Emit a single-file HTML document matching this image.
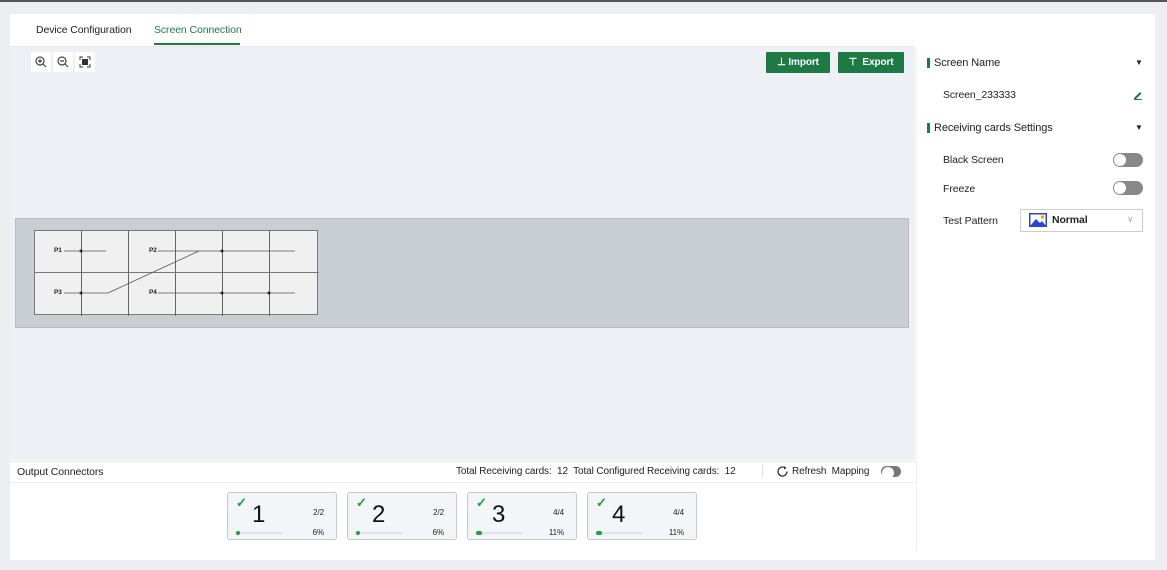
<!DOCTYPE html>
<html><head><meta charset="utf-8"><style>
*{box-sizing:border-box;margin:0;padding:0}
body{width:1167px;height:570px;background:#eceef2;font-family:"Liberation Sans",sans-serif;font-size:10.5px;color:#222;position:relative;overflow:hidden;letter-spacing:-0.1px}
.a{position:absolute}
.topline{left:0;top:0;width:1167px;height:2px;background:#555}
.main{left:10px;top:14px;width:1145px;height:546px;background:#fff}
.tab{top:24px;font-size:10.5px}
.canvas{left:10px;top:47px;width:905px;height:413px;background:#eef0f6}
.zb{top:52px;width:20px;height:20px;background:#fff;display:flex;align-items:center;justify-content:center}
.btn{top:52px;height:21px;background:#1d7a45;color:#fff;font-size:10px;font-weight:bold;display:flex;align-items:center;justify-content:center;border-radius:1px}
.strip{left:15px;top:218px;width:894px;height:110px;background:#c9cdd4;border:1px solid #b8bcc3}
.grid{left:34px;top:230px;width:284px;height:85px;background:#f0f0f0;border:1px solid #777}
.vl{width:1px;background:#666;top:0;height:85px}
.hl{height:1px;background:#777;left:0;width:284px;top:41px}
.lbl{font-size:6.5px;font-weight:bold}
.right{left:916px;top:47px;width:239px;height:504px;border-left:1px solid #eee;background:#fff}
.sec{font-size:11px;color:#222}
.bar{width:3px;height:10px;background:#1d7a45}
.tog{width:30px;height:14px;border-radius:7px;background:#888}
.tog::after{content:"";position:absolute;left:1px;top:1px;width:12px;height:12px;border-radius:6px;background:#fff}
.card{top:492px;width:110px;height:48px;border:1px solid #c4c8ce;border-radius:3px;background:#f4f5f8}
.card .n{position:absolute;left:24px;top:8px;font-size:24px;color:#111}
.card .c{position:absolute;left:8px;top:2px;color:#1aa33a;font-size:13px;font-weight:bold}
.card .f{position:absolute;right:12px;top:15px;font-size:8px}
.card .p{position:absolute;right:12px;top:35px;font-size:8px}
.card .t{position:absolute;left:8px;top:39px;width:46px;height:2px;background:#e0e2e6}
.card .d{position:absolute;left:8px;top:38px;width:4px;height:4px;border-radius:2px;background:#1aa33a}
</style></head><body>
<div class="a topline"></div>
<div class="a main"></div>
<div class="a tab" style="left:36px">Device Configuration</div>
<div class="a tab" style="left:154px;color:#1d7a45">Screen Connection</div>
<div class="a" style="left:154px;top:43px;width:86px;height:2px;background:#1d7a45"></div>
<div class="a" style="left:10px;top:46px;width:905px;height:1px;background:#e6e8ec"></div>
<div class="a canvas"></div>
<div class="a zb" style="left:31px"><svg width="12" height="12"><circle cx="5" cy="5" r="4" fill="none" stroke="#444" stroke-width="1.2"/><path d="M8 8l3 3M3 5h4M5 3v4" stroke="#444" stroke-width="1.2"/></svg></div>
<div class="a zb" style="left:53px"><svg width="12" height="12"><circle cx="5" cy="5" r="4" fill="none" stroke="#444" stroke-width="1.2"/><path d="M8 8l3 3M3 5h4" stroke="#444" stroke-width="1.2"/></svg></div>
<div class="a zb" style="left:75px"><svg width="12" height="12"><rect x="3" y="3" width="6" height="6" fill="#333"/><path d="M1 4V1h3M8 1h3v3M11 8v3H8M4 11H1V8" stroke="#333" fill="none"/></svg></div>
<div class="a btn" style="left:766px;width:64px">⊥ Import</div>
<div class="a btn" style="left:838px;width:66px">⊤&nbsp; Export</div>
<div class="a strip"></div>
<div class="a grid">
 <div class="a vl" style="left:46px"></div><div class="a vl" style="left:93px"></div><div class="a vl" style="left:140px"></div><div class="a vl" style="left:187px"></div><div class="a vl" style="left:234px"></div>
 <div class="a hl"></div>
 <svg class="a" style="left:0;top:0" width="284" height="85"><g stroke="#555" stroke-width="0.8" fill="none"><path d="M29 20H71"/><path d="M123 20H260"/><path d="M29 62H73L164 20"/><path d="M123 62H260"/></g><g fill="#222"><circle cx="46" cy="20" r="1.5"/><circle cx="187" cy="20" r="1.5"/><circle cx="46" cy="62" r="1.5"/><circle cx="187" cy="62" r="1.5"/><circle cx="234" cy="62" r="1.5"/></g></svg>
 <div class="a lbl" style="left:19px;top:16px">P1</div><div class="a lbl" style="left:114px;top:16px">P2</div>
 <div class="a lbl" style="left:19px;top:58px">P3</div><div class="a lbl" style="left:114px;top:58px">P4</div>
</div>
<div class="a right"></div>
<div class="a bar" style="left:927px;top:58px"></div><div class="a sec" style="left:934px;top:57px">Screen Name</div>
<div class="a" style="left:1135px;top:58px;font-size:8px">▼</div>
<div class="a" style="left:943px;top:89px">Screen_233333</div>
<svg class="a" style="left:1133px;top:90px" width="10" height="10"><path d="M1 8L7 2l1.5 1.5-6 6H1z" fill="#1d7a45"/><path d="M1 9.5h8" stroke="#1d7a45"/></svg>
<div class="a bar" style="left:927px;top:123px"></div><div class="a sec" style="left:934px;top:122px">Receiving cards Settings</div>
<div class="a" style="left:1135px;top:123px;font-size:8px">▼</div>
<div class="a" style="left:943px;top:154px">Black Screen</div>
<div class="a tog" style="left:1113px;top:153px"></div>
<div class="a" style="left:943px;top:183px">Freeze</div>
<div class="a tog" style="left:1113px;top:181px"></div>
<div class="a" style="left:943px;top:215px">Test Pattern</div>
<div class="a" style="left:1020px;top:209px;width:123px;height:23px;border:1px solid #ccc;background:#fff"></div>
<svg class="a" style="left:1029px;top:213px" width="18" height="14"><rect width="18" height="14" fill="#2747c9"/><rect x="1.5" y="1.5" width="15" height="11" fill="#fff"/><path d="M1.5 12.5L7 6l4 4 2-2 3.5 4.5z" fill="#2747c9"/><rect x="12" y="2.5" width="3" height="3" fill="#f0a000"/></svg>
<div class="a" style="left:1052px;top:214px;font-weight:bold">Normal</div>
<div class="a" style="left:1127px;top:214px;color:#aaa;font-size:9px">∨</div>
<div class="a" style="left:10px;top:461px;width:905px;height:99px;background:#fff;border-top:1px solid #e4e6ea"></div>
<div class="a" style="left:10px;top:482px;width:905px;height:1px;background:#eceef2"></div>
<div class="a" style="left:17px;top:466px">Output Connectors</div>
<div class="a" style="left:456px;top:466px;font-size:10px">Total Receiving cards:&nbsp; 12&nbsp; Total Configured Receiving cards:&nbsp; 12</div>
<div class="a" style="left:762px;top:465px;width:1px;height:12px;background:#ddd"></div>
<svg class="a" style="left:776px;top:465px" width="13" height="13"><path d="M11 6.5A4.5 4.5 0 1 1 9 2.8" fill="none" stroke="#333" stroke-width="1.3"/><path d="M8 1l2.5 2-2.5 1.5z" fill="#333"/></svg>
<div class="a" style="left:792px;top:466px;font-size:10px">Refresh&nbsp; Mapping</div>
<div class="a tog" style="left:881px;top:466px;width:20px;height:11px;background:#777"></div>
<div class="a card" style="left:227px"><span class="c">✓</span><span class="n">1</span><span class="f">2/2</span><span class="p">6%</span><span class="t"></span><span class="d"></span></div>
<div class="a card" style="left:347px"><span class="c">✓</span><span class="n">2</span><span class="f">2/2</span><span class="p">6%</span><span class="t"></span><span class="d"></span></div>
<div class="a card" style="left:467px"><span class="c">✓</span><span class="n">3</span><span class="f">4/4</span><span class="p">11%</span><span class="t"></span><span class="d" style="width:6px"></span></div>
<div class="a card" style="left:587px"><span class="c">✓</span><span class="n">4</span><span class="f">4/4</span><span class="p">11%</span><span class="t"></span><span class="d" style="width:6px"></span></div>
</body></html>
